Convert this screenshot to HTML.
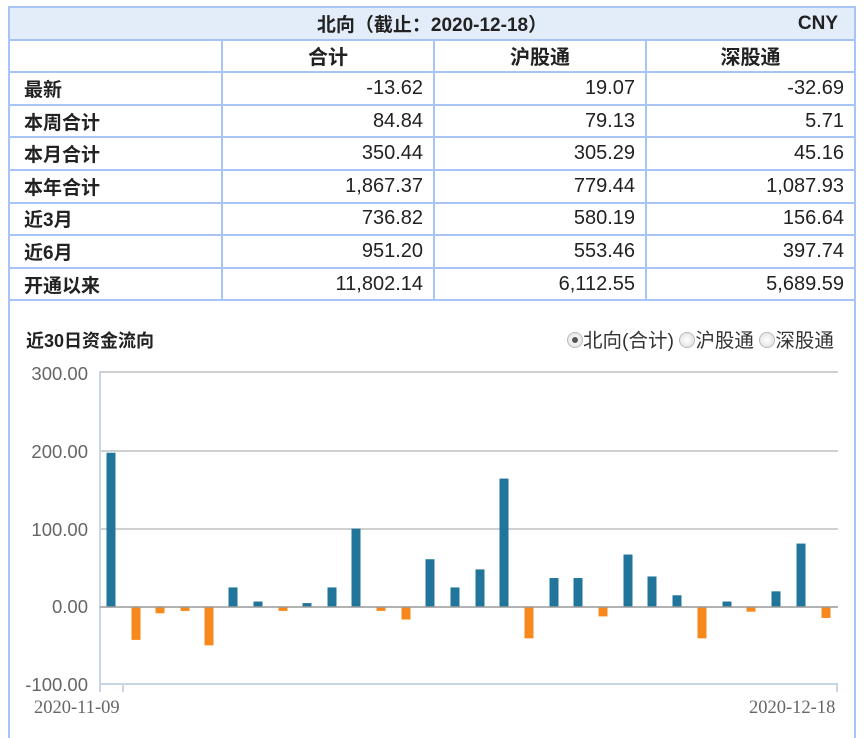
<!DOCTYPE html><html><head><meta charset="utf-8"><style>
body{margin:0;width:864px;height:718px;overflow:hidden;background:#fff;font-family:"Liberation Sans","Noto Sans CJK SC",sans-serif;}
.box{position:absolute;left:8px;top:6px;width:844px;height:730px;border:2px solid #a8c4f6;border-bottom:none;}
table{position:absolute;left:8px;top:6px;border-collapse:collapse;width:848px;}
td{border:2px solid #a8c4f6;height:30.6px;padding:0 10px;font-size:20px;text-align:right;color:#222;}
td.l{text-align:left;font-weight:bold;padding-left:14px;font-size:19px;}
tr.h td{text-align:center;font-weight:bold;}
tr.t td{background:#e3edf9;font-weight:bold;position:relative;text-align:center;font-size:19px;}
.ttl{position:absolute;left:26px;top:327px;font-size:18px;font-weight:bold;color:#222;}
.rad{position:absolute;left:567px;top:324px;font-size:19.5px;color:#333;}
.r{display:inline-block;width:14px;height:14px;border-radius:50%;border:1px solid #bbb;background:radial-gradient(#fff,#ddd);vertical-align:-1px;position:relative}
.r.on::after{content:"";position:absolute;left:4px;top:4px;width:6px;height:6px;border-radius:50%;background:#555}
.yl{position:absolute;left:18px;width:70px;text-align:right;font-size:18.5px;color:#666;}
.xl{position:absolute;top:698px;font-family:"Liberation Serif",serif;font-size:18.5px;color:#666;}
</style></head><body>
<div class="box"></div>
<table>
<tr class="t"><td colspan="4">北向（截止：2020-12-18）<span style="position:absolute;right:16px;top:5px">CNY</span></td></tr>
<tr class="h"><td style="width:191px"></td><td style="width:190px">合计</td><td style="width:190px">沪股通</td><td>深股通</td></tr>
<tr><td class="l">最新</td><td>-13.62</td><td>19.07</td><td>-32.69</td></tr>
<tr><td class="l">本周合计</td><td>84.84</td><td>79.13</td><td>5.71</td></tr>
<tr><td class="l">本月合计</td><td>350.44</td><td>305.29</td><td>45.16</td></tr>
<tr><td class="l">本年合计</td><td>1,867.37</td><td>779.44</td><td>1,087.93</td></tr>
<tr><td class="l">近3月</td><td>736.82</td><td>580.19</td><td>156.64</td></tr>
<tr><td class="l">近6月</td><td>951.20</td><td>553.46</td><td>397.74</td></tr>
<tr><td class="l">开通以来</td><td>11,802.14</td><td>6,112.55</td><td>5,689.59</td></tr>
</table>
<div class="ttl">近30日资金流向</div>
<div class="rad"><span class="r on"></span>北向(合计) <span class="r"></span>沪股通 <span class="r"></span>深股通</div>
<div class="yl" style="top:363px">300.00</div>
<div class="yl" style="top:441px">200.00</div>
<div class="yl" style="top:519px">100.00</div>
<div class="yl" style="top:596px">0.00</div>
<div class="yl" style="top:674px">-100.00</div>
<div class="xl" style="left:34px">2020-11-09</div>
<div class="xl" style="left:749px">2020-12-18</div>
<svg width="864" height="718" style="position:absolute;left:0;top:0">
<g stroke="#d0d0d0" stroke-width="2"><line x1="100" y1="372" x2="838" y2="372"/><line x1="100" y1="451" x2="838" y2="451"/><line x1="100" y1="529" x2="838" y2="529"/></g>
<line x1="100" y1="684" x2="838" y2="684" stroke="#c8d6e6" stroke-width="2"/>
<line x1="100" y1="371" x2="100" y2="692" stroke="#c8d6e6" stroke-width="2"/>
<line x1="123" y1="684" x2="123" y2="692" stroke="#c8d6e6" stroke-width="2"/>
<line x1="837" y1="684" x2="837" y2="692" stroke="#c8d6e6" stroke-width="2"/>
<g transform="translate(0,607) scale(1,-0.783)">
<g fill="#21759b">
<rect x="106.5" y="0" width="9" height="197"/><rect x="228.5" y="0" width="9" height="25"/><rect x="253.5" y="0" width="9" height="7"/><rect x="302.5" y="0" width="9" height="5"/><rect x="327.5" y="0" width="9" height="25"/><rect x="351.5" y="0" width="9" height="100"/><rect x="425.5" y="0" width="9" height="61"/><rect x="450.5" y="0" width="9" height="25"/><rect x="475.5" y="0" width="9" height="48"/><rect x="499.5" y="0" width="9" height="164"/><rect x="549.5" y="0" width="9" height="37"/><rect x="573.5" y="0" width="9" height="37"/><rect x="623.5" y="0" width="9" height="67"/><rect x="647.5" y="0" width="9" height="39"/><rect x="672.5" y="0" width="9" height="15"/><rect x="722.5" y="0" width="9" height="7"/><rect x="771.5" y="0" width="9" height="20"/><rect x="796.5" y="0" width="9" height="81"/>
</g>
<g fill="#f7891c">
<rect x="131.5" y="-42" width="9" height="42"/><rect x="155.5" y="-8" width="9" height="8"/><rect x="180.5" y="-5" width="9" height="5"/><rect x="204.5" y="-49" width="9" height="49"/><rect x="278.5" y="-5" width="9" height="5"/><rect x="376.5" y="-5" width="9" height="5"/><rect x="401.5" y="-16" width="9" height="16"/><rect x="524.5" y="-40" width="9" height="40"/><rect x="598.5" y="-12" width="9" height="12"/><rect x="697.5" y="-40" width="9" height="40"/><rect x="746.5" y="-6" width="9" height="6"/><rect x="821.5" y="-14" width="9" height="14"/>
</g></g>
<line x1="100" y1="607" x2="838" y2="607" stroke="#999" stroke-width="1.5"/>
</svg>
</body></html>
